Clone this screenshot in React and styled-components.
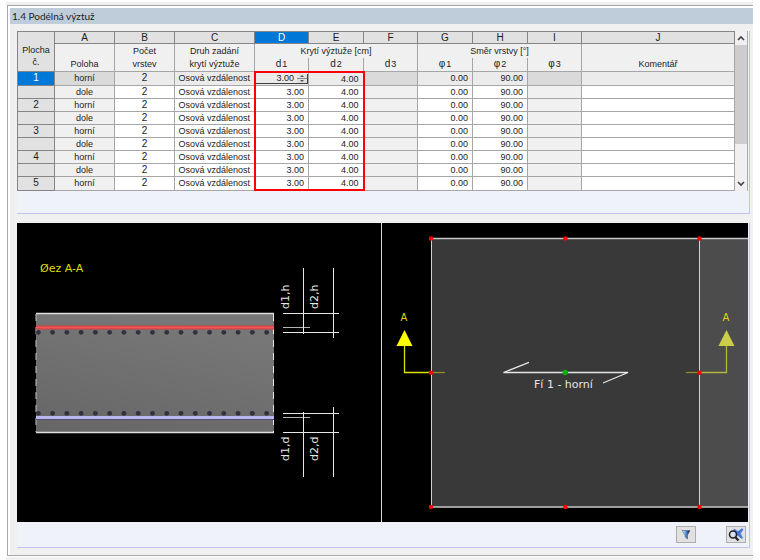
import { Fragment } from "react"
import styled, { createGlobalStyle } from "styled-components"

const colors = {
    face: "#f0f0f0",
    header: "#e1e1e1",
    grid: "#a6a6a6",
    edge: "#858585",
    accent: "#0078d7",
    panel: "#eff3f9",
    panelEdge: "#c3c4ee",
    text: "#1c1c24",
    mark: "#fb0007",
}

const GlobalStyle = createGlobalStyle`
    * { box-sizing: border-box; }

    body {
        margin: 0;
        background: #ffffff;
        color: ${colors.text};
        font-family: "Liberation Sans", Arial, sans-serif;
        font-size: 9px;
        line-height: 12px;
    }
`

const Page = styled.main`
    padding: 2px 7px 0 6px;
`

const Strip = styled.div`
    height: 3px;
    background: ${colors.face};
`

const Frame = styled.section`
    margin-left: 1px;
    padding: 2px 0 0 2px;
    background: #ffffff;
    border: 1px solid ${colors.grid};
    border-right: none;
    margin-bottom: 1px;
`

const Inner = styled.div`
    background: ${colors.face};
    padding-bottom: 7px;
`

const Title = styled.h1`
    margin: 0;
    padding: 0 2px;
    background: #bfcddb;
    font-family: Lato, "Open Sans", sans-serif;
    font-size: 10px;
    font-weight: 400;
    line-height: 16px;
`

const Content = styled.div`
    display: flex;
    flex-direction: column;
    gap: 9px;
    padding: 7px 3px 0 7px;
`

const Panel = styled.div`
    background: ${colors.panel};
    border: 1px solid ${colors.panelEdge};
    border-width: 0 1px 1px 0;
    padding-right: 1px;
`

const TableArea = styled.div`
    display: flex;
    margin-bottom: 22px;
`

const Table = styled.table`
    flex: 1;
    width: 100%;
    height: 160px;
    table-layout: fixed;
    border-collapse: collapse;
    background: #ffffff;
`

const Col = styled.col`
    width: ${props => props.$width ? `${props.$width}px` : "auto"};
`

const HeadCell = styled.th`
    height: 14px;
    padding: 0;
    overflow: hidden;
    white-space: nowrap;
    font-weight: 400;
    text-align: center;
    vertical-align: middle;
    background: ${colors.face};
    border: 1px solid ${colors.grid};
    border-top: none;
    border-bottom: ${props => props.$open ? "none" : `1px solid ${colors.grid}`};

    small {
        margin-left: 1px;
        font-size: 9px;
    }
`

const SymbolCell = styled(HeadCell)`
    font-size: 10px;
`

const LetterCell = styled(HeadCell)`
    height: 12px;
    font-size: 10px;
    line-height: 10px;
    color: ${props => props.$active ? "#ffffff" : colors.text};
    background: ${props => props.$active ? colors.accent : colors.header};
    border: 1px solid ${colors.edge};
`

const CornerCell = styled(HeadCell)`
    padding-top: 8px;
    background: ${colors.header};
    border: 1px solid ${colors.edge};
`

const RowHead = styled.th`
    padding: 0;
    font-size: 10px;
    font-weight: 400;
    line-height: 10px;
    color: ${props => props.$active ? "#ffffff" : colors.text};
    background: ${props => props.$active ? colors.accent : colors.header};
    border: 1px solid ${colors.edge};
`

const cellBackground = props => {
    if (props.$active) return props.$locked ? "#dadada" : "#ebebeb"
    return props.$locked ? colors.face : "#ffffff"
}

const Cell = styled.td`
    padding: ${props => props.$align === "right" ? "0 4px 0 0" : "0"};
    overflow: hidden;
    white-space: nowrap;
    line-height: 10px;
    text-align: ${props => props.$align || "center"};
    background: ${cellBackground};
    border: 1px solid ${colors.grid};
    ${props => props.$mark && `border-${props.$mark}: 2px solid ${colors.mark};`}
    ${props => props.$markTop && `border-top: 2px solid ${colors.mark};`}
    ${props => props.$markBottom && `border-bottom: 2px solid ${colors.mark};`}
`

const CountCell = styled(Cell)`
    font-size: 10px;
`

const Editor = styled.div`
    display: flex;
    align-items: center;
    height: 10px;
    margin-right: -4px;
    border: 1px solid #404040;
    border-width: 0 1px 1px 0;
`

const EditorInput = styled.input`
    flex: 1;
    min-width: 0;
    height: 10px;
    padding: 0 3px 0 0;
    border: none;
    outline: none;
    background: transparent;
    color: inherit;
    font: inherit;
    line-height: 10px;
    text-align: right;
`

const SpinButton = styled.button`
    width: 10px;
    height: 9px;
    padding: 0;
    border: none;
    background: ${colors.header};

    svg { display: block; }
`

const ScrollBar = styled.div`
    display: flex;
    flex-direction: column;
    width: 13px;
    background: ${colors.face};
    border-right: 1px solid #a9a9b8;
`

const ScrollButton = styled.button`
    height: 14px;
    padding: 0;
    border: none;
    background: transparent;

    svg { display: block; margin: 0 auto; }
`

const ScrollTrack = styled.div`
    flex: 1;
`

const ScrollThumb = styled.div`
    height: 75%;
    background: #cdcdcd;
`

const Drawings = styled.div`
    display: grid;
    grid-template-columns: 364fr 367fr;
    background: #000000;
`

const Drawing = styled.svg`
    display: block;
    width: 100%;
    font-family: "DejaVu Sans", Verdana, sans-serif;
    font-size: 11px;
`

const PlanBox = styled.div`
    border-left: 1px solid #d8d8d8;
`

const ToolBar = styled.div`
    display: flex;
    justify-content: flex-end;
    gap: 30px;
    padding: 4px 2px;
`

const ToolButton = styled.button`
    display: flex;
    align-items: center;
    justify-content: center;
    width: 20px;
    height: 17px;
    padding: 0;
    background: ${colors.header};
    border: 1px solid #adadad;
`

const widths = [37, 60, 60, 80, 54, 55, 54, 55, 55, 54, null]
const letters = ["A", "B", "C", "D", "E", "F", "G", "H", "I", "J"]

const rows = [1, 2, 3, 4, 5].flatMap(number => [
    { number, position: "horní" },
    { number: null, position: "dole" },
]).slice(0, 9)

const barPositions = Array.from({ length: 17 }, (_, i) => 21.3 + i * 14.27)

function Sub({ name, index }) {
    return <SymbolCell>{name}<small>{index}</small></SymbolCell>
}

function CoverTable() {
    return (
        <Table>
            <colgroup>
                {widths.map((width, i) => <Col key={i} $width={width} />)}
            </colgroup>
            <thead>
                <tr>
                    <CornerCell rowSpan={3} scope="col">Plocha<br />č.</CornerCell>
                    {letters.map(letter => (
                        <LetterCell key={letter} $active={letter === "D"}>{letter}</LetterCell>
                    ))}
                </tr>
                <tr>
                    <HeadCell $open />
                    <HeadCell $open>Počet</HeadCell>
                    <HeadCell $open>Druh zadání</HeadCell>
                    <HeadCell $open colSpan={3}>Krytí výztuže [cm]</HeadCell>
                    <HeadCell $open colSpan={3}>Směr vrstvy [°]</HeadCell>
                    <HeadCell $open />
                </tr>
                <tr>
                    <HeadCell>Poloha</HeadCell>
                    <HeadCell>vrstev</HeadCell>
                    <HeadCell>krytí výztuže</HeadCell>
                    <Sub name="d" index="1" />
                    <Sub name="d" index="2" />
                    <Sub name="d" index="3" />
                    <Sub name="φ" index="1" />
                    <Sub name="φ" index="2" />
                    <Sub name="φ" index="3" />
                    <HeadCell>Komentář</HeadCell>
                </tr>
            </thead>
            <tbody>
                {rows.map((row, i) => {
                    const active = i === 0
                    const marks = { $markTop: active, $markBottom: i === rows.length - 1 }
                    return (
                        <tr key={i}>
                            <RowHead scope="row" $active={active}>{row.number}</RowHead>
                            <Cell $active={active} $locked>{row.position}</Cell>
                            <CountCell $active={active}>2</CountCell>
                            <Cell $active={active}>Osová vzdálenost</Cell>
                            <Cell $active={active} $align="right" $mark="left" {...marks}>
                                {active ? (
                                    <Editor>
                                        <EditorInput aria-label="d1" defaultValue="3.00" />
                                        <SpinButton aria-label="d1 step">
                                            <svg width="10" height="9" viewBox="0 0 10 9">
                                                <path d="M0 4.5h10" stroke="#8a8a8a" />
                                                <path d="M5 1l2 2H3zM5 8L3 6h4z" fill="#555" />
                                            </svg>
                                        </SpinButton>
                                    </Editor>
                                ) : "3.00"}
                            </Cell>
                            <Cell $active={active} $align="right" $mark="right" {...marks}>4.00</Cell>
                            <Cell $active={active} $locked />
                            <Cell $active={active} $align="right">0.00</Cell>
                            <Cell $active={active} $align="right">90.00</Cell>
                            <Cell $active={active} $locked />
                            <Cell $active={active} />
                        </tr>
                    )
                })}
            </tbody>
        </Table>
    )
}

// slab cross-section with both reinforcement layers
function SectionDrawing() {
    return (
        <Drawing viewBox="0 0 364 299" role="img" aria-label="Section A-A">
            <defs>
                <linearGradient id="slab" x1="0" y1="1" x2="0.4" y2="0">
                    <stop offset="0" stopColor="#666666" />
                    <stop offset="1" stopColor="#777777" />
                </linearGradient>
            </defs>
            <text x="23" y="49" fill="#dcdc00">Øez A-A</text>
            <rect x="19" y="90" width="238" height="120" fill="url(#slab)" />
            <path d="M19 90.5H257M19 209.5H257" stroke="#dedede" strokeWidth="1.4" />
            <path d="M19 91V209" stroke="#c4c4c4" strokeDasharray="7 6" />
            <path d="M256.5 91V209" stroke="#e8e8e8" strokeDasharray="7 6" />
            {[109.3, 190.3].map(y => (
                <Fragment key={y}>
                    {barPositions.map(x => <circle key={x} cx={x} cy={y} r="2.4" fill="#31313f" />)}
                </Fragment>
            ))}
            <rect x="19" y="102.5" width="238" height="4" fill="#cd3f3f" />
            <rect x="19" y="103.5" width="238" height="2" fill="#f25555" />
            <rect x="19" y="195" width="238" height="2" fill="#505074" />
            <rect x="19" y="193" width="238" height="3" fill="#b9b7ee" />
            <path
                d="M266 90.5H322M266 109.5H322M266 190.5H322M266 209.5H322"
                stroke="#e6e6e6"
            />
            <path d="M266 104.5H293M266 194.5H293" stroke="#b4b4b4" />
            <path d="M286.5 45V111M316.5 45V115M286.5 189V254M316.5 184V254" stroke="#e6e6e6" />
            <g fill="#e6e6e6">
                <text transform="translate(272 86) rotate(-90)">d1,h</text>
                <text transform="translate(301 86) rotate(-90)">d2,h</text>
                <text transform="translate(272 238) rotate(-90)">d1,d</text>
                <text transform="translate(301 238) rotate(-90)">d2,d</text>
            </g>
        </Drawing>
    )
}

// plan of the surface with the section line A-A
function PlanDrawing() {
    const nodes = [
        [49, 15.5], [183.3, 15.5], [317.5, 15.5],
        [49, 149.7], [317.5, 149.7],
        [49, 284], [183.3, 284], [317.5, 284],
    ]
    return (
        <Drawing viewBox="0 0 366 299" role="img" aria-label="Surface plan">
            <rect x="49" y="15" width="268" height="269" fill="#393939" />
            <rect x="317" y="15" width="49" height="269" fill="#4c4c4c" />
            <path d="M49 15.5H366M49 284H366" stroke="#c8c8c8" strokeWidth="1.6" />
            <path d="M49.5 15V284M317.5 15V284" stroke="#d2d2d2" />
            <path d="M22.5 122V149.5H49" fill="none" stroke="#e0e000" strokeWidth="1.3" />
            <path d="M49 149.5H63" stroke="#8f8f22" strokeWidth="1.3" />
            <path d="M22.5 107L30.5 123H14.5z" fill="#ffff00" />
            <path d="M304 149.5H317" stroke="#8f8f22" strokeWidth="1.3" />
            <path d="M317 149.5H344.5V122" fill="none" stroke="#b4b43c" strokeWidth="1.3" />
            <path d="M344.5 107L352.5 123H336.5z" fill="#cccc4c" />
            <g fill="#dcdc00" fontSize="10" textAnchor="middle">
                <text x="22" y="98">A</text>
                <text x="344" y="98">A</text>
            </g>
            <path
                d="M147 139.3L121.5 149.5H246L221 160"
                fill="none"
                stroke="#e6e6e6"
                strokeWidth="1.3"
            />
            <text x="152" y="165" fill="#e6e6e6">Fí 1 - horní</text>
            {nodes.map(([x, y]) => <circle key={`${x}-${y}`} cx={x} cy={y} r="2.2" fill="#ff0000" />)}
            <circle cx="183.3" cy="149.5" r="2.8" fill="#00b400" />
        </Drawing>
    )
}

function FilterIcon() {
    return (
        <svg width="10" height="11" viewBox="0 0 10 11">
            <defs>
                <linearGradient id="funnel">
                    <stop offset="0.1" stopColor="#e4f2ff" />
                    <stop offset="0.5" stopColor="#4f8fe0" />
                    <stop offset="0.9" stopColor="#10203c" />
                </linearGradient>
            </defs>
            <path d="M1 1.5H9L6.5 6V10L4 8V6z" fill="url(#funnel)" stroke="#46607e" strokeWidth="0.6" />
        </svg>
    )
}

function ZoomIcon() {
    return (
        <svg width="16" height="14" viewBox="0 0 16 14">
            <path d="M6 1.5L14 10M14.5 1L6.5 9" stroke="#4a7ddb" strokeWidth="2.2" />
            <path d="M5 1L10 3L15.5 0.5L13 5.5L15 11L10 8z" fill="#3f72d4" fillOpacity="0.75" />
            <circle cx="5" cy="6.5" r="3.5" fill="#dbe6f3" fillOpacity="0.7" stroke="#222" strokeWidth="1.5" />
            <path d="M7.5 9.3L10.5 12.5" stroke="#222" strokeWidth="2.2" />
        </svg>
    )
}

export default function App() {
    return (
        <>
            <GlobalStyle />
            <Page>
                <Strip />
                <Frame>
                    <Inner>
                        <Title>1.4 Podélná výztuž</Title>
                        <Content>
                            <Panel>
                                <TableArea>
                                    <CoverTable />
                                    <ScrollBar>
                                        <ScrollButton aria-label="Scroll up">
                                            <svg width="8" height="6" viewBox="0 0 8 6">
                                                <path d="M1 5L4 2L7 5" fill="none" stroke="#444" strokeWidth="1.6" />
                                            </svg>
                                        </ScrollButton>
                                        <ScrollTrack><ScrollThumb /></ScrollTrack>
                                        <ScrollButton aria-label="Scroll down">
                                            <svg width="8" height="6" viewBox="0 0 8 6">
                                                <path d="M1 1L4 4L7 1" fill="none" stroke="#444" strokeWidth="1.6" />
                                            </svg>
                                        </ScrollButton>
                                    </ScrollBar>
                                </TableArea>
                            </Panel>
                            <Panel>
                                <Drawings>
                                    <SectionDrawing />
                                    <PlanBox><PlanDrawing /></PlanBox>
                                </Drawings>
                                <ToolBar>
                                    <ToolButton aria-label="Filter"><FilterIcon /></ToolButton>
                                    <ToolButton aria-label="Show all"><ZoomIcon /></ToolButton>
                                </ToolBar>
                            </Panel>
                        </Content>
                    </Inner>
                </Frame>
                <Strip />
            </Page>
        </>
    )
}
